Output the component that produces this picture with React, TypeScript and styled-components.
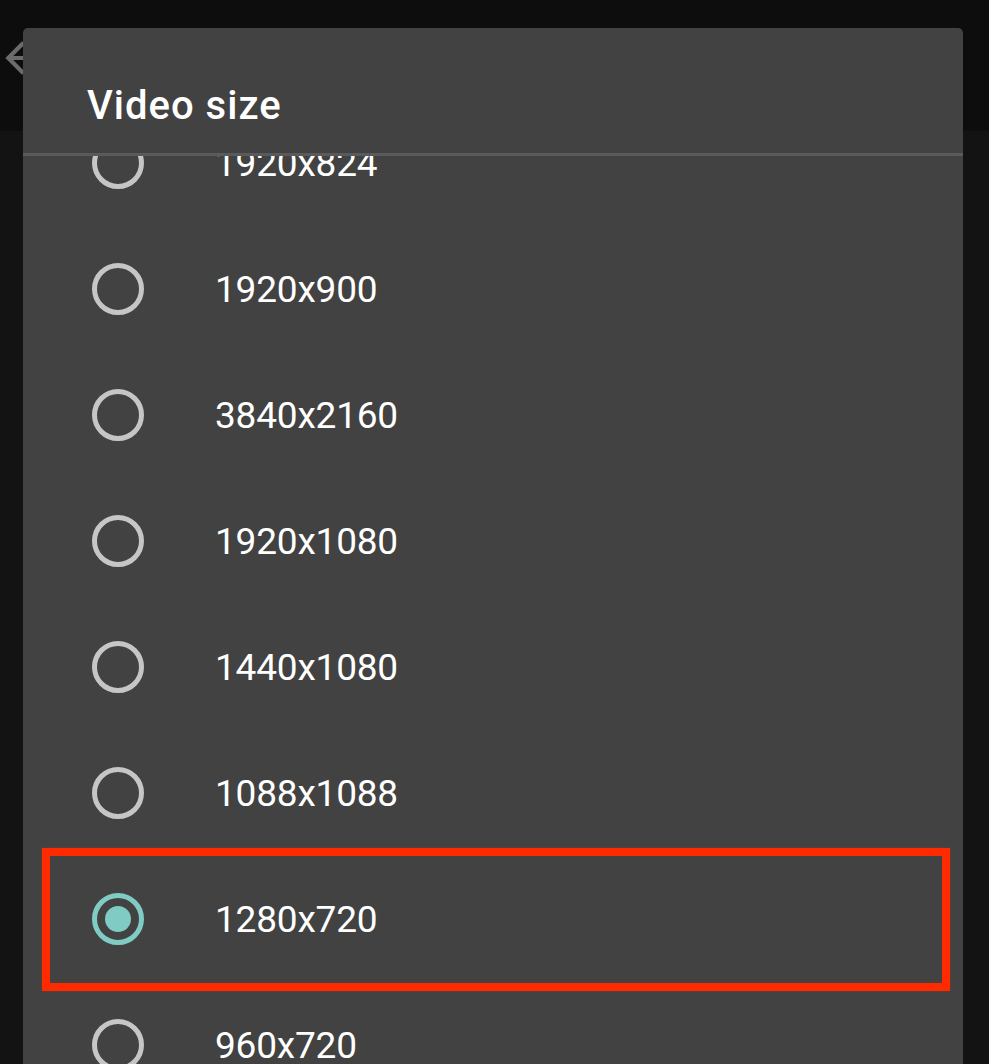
import React from 'react'
import styled, { createGlobalStyle } from 'styled-components'

const sizes = ['1920x824', '1920x900', '3840x2160', '1920x1080', '1440x1080', '1088x1088', '1280x720', '960x720']

const GlobalStyle = createGlobalStyle`
	html, body {
		margin: 0;
		padding: 0;
		background: #131313;
		font-family: Roboto, 'Noto Sans', sans-serif;
	}
`

const Screen = styled.div`
	position: relative;
	width: 989px;
	height: 1064px;
	overflow: hidden;
	background: #131313;
`

const AppBar = styled.div`
	display: flex;
	align-items: flex-start;
	height: 131px;
	padding-top: 33px;
	box-sizing: border-box;
	background: #0d0d0d;
`

const BackIcon = styled.svg`
	width: 50px;
	height: 50px;
	margin-left: -3px;
	fill: #6b6b6b;
`

const Dialog = styled.div`
	position: absolute;
	top: 28px;
	left: 23px;
	width: 940px;
	height: 1100px;
	display: flex;
	flex-direction: column;
	background: #424242;
	border-radius: 5px;
	overflow: hidden;
`

const Title = styled.div`
	height: 125px;
	flex-shrink: 0;
	padding: 54px 64px 0;
	box-sizing: border-box;
	color: #fff;
	font-size: 40px;
	font-weight: 500;
	letter-spacing: 1px;
`

const Divider = styled.div`
	height: 3px;
	flex-shrink: 0;
	background: #5a5a5a;
`

const ListViewport = styled.div`
	flex: 1;
	overflow: hidden;
`

const List = styled.div`
	display: flex;
	flex-direction: column;
	margin-top: -56px;
`

const Row = styled.div`
	position: relative;
	display: flex;
	align-items: center;
	gap: 71px;
	height: 126px;
	flex-shrink: 0;
	padding-left: 69px;
	box-sizing: border-box;
`

const Radio = styled.span<{ $checked: boolean }>`
	display: flex;
	align-items: center;
	justify-content: center;
	width: 52px;
	height: 52px;
	flex-shrink: 0;
	box-sizing: border-box;
	border-radius: 50%;
	border: 5.5px solid ${p => (p.$checked ? '#80cbc4' : '#c6c6c6')};

	&::after {
		content: '';
		display: ${p => (p.$checked ? 'block' : 'none')};
		width: 26px;
		height: 26px;
		border-radius: 50%;
		background: #80cbc4;
	}
`

const Label = styled.span`
	color: #fff;
	font-size: 37px;
	font-weight: 400;
	letter-spacing: -0.2px;
`

const Highlight = styled.div`
	position: absolute;
	top: -8px;
	bottom: -9px;
	left: 19px;
	right: 13px;
	border: 8px solid #ff2a00;
	box-shadow: 0 0 1px rgba(255, 42, 0, 0.6);
	pointer-events: none;
`

const App = () => {
	const selected = '1280x720'

	return (
		<>
			<GlobalStyle />
			<Screen>
				<AppBar>
					<BackIcon viewBox='0 0 24 24'>
						<path d='M20 11H7.83l5.59-5.59L12 4l-8 8 8 8 1.41-1.41L7.83 13H20v-2z' />
					</BackIcon>
				</AppBar>

				<Dialog>
					<Title>Video size</Title>
					<Divider />
					<ListViewport>
						<List>
							{sizes.map(size => (
								<Row key={size}>
									<Radio $checked={size === selected} />
									<Label>{size}</Label>
									{size === selected && <Highlight />}
								</Row>
							))}
						</List>
					</ListViewport>
				</Dialog>
			</Screen>
		</>
	)
}

export default App
